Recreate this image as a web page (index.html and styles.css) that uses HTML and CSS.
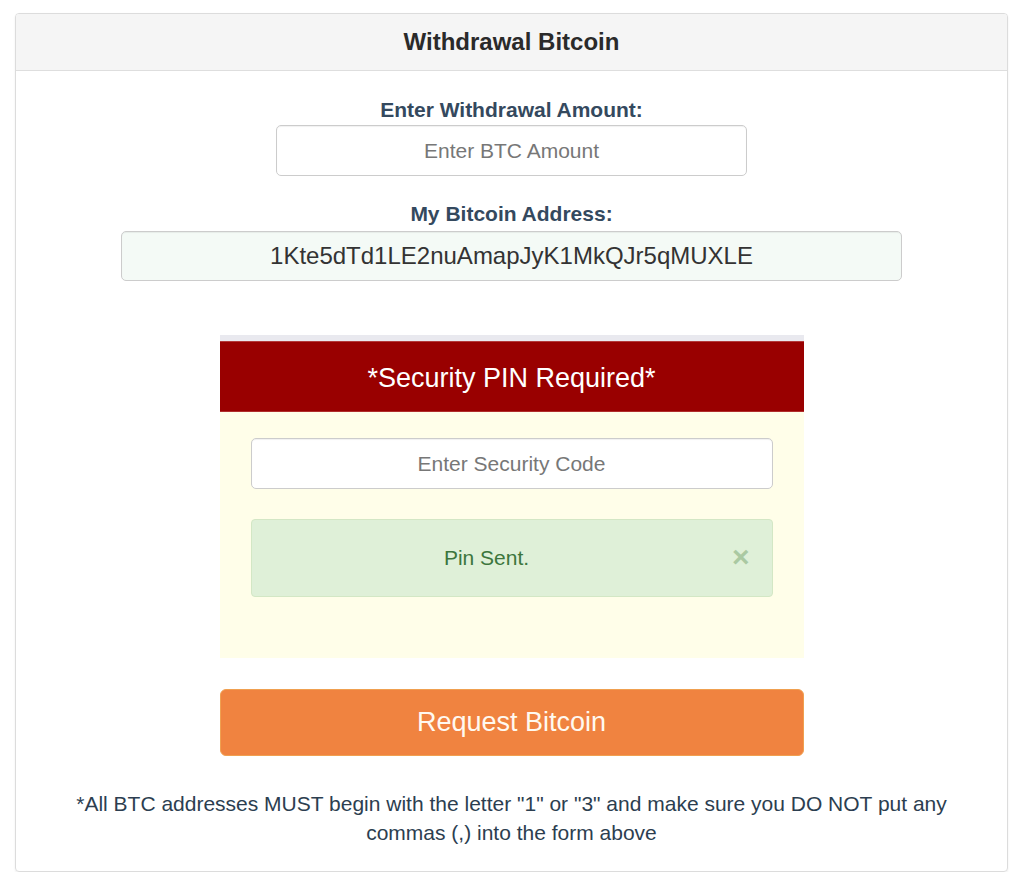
FILE: index.html
```html
<!DOCTYPE html>
<html lang="en">
<head>
  <meta charset="UTF-8">
  <title>Withdrawal Bitcoin</title>
  <link rel="stylesheet" href="styles.css">
</head>
<body>

  <!-- Withdrawal panel -->
  <div class="panel">
    <div class="panel-heading">Withdrawal Bitcoin</div>

    <div class="panel-body">
      <label class="field-label" for="amount">Enter Withdrawal Amount:</label>
      <input type="text" id="amount" class="field amount" placeholder="Enter BTC Amount">

      <label class="field-label" for="address">My Bitcoin Address:</label>
      <input type="text" id="address" class="field address" value="1Kte5dTd1LE2nuAmapJyK1MkQJr5qMUXLE" readonly>

      <!-- Security PIN box -->
      <div class="pin-box">
        <div class="pin-heading">*Security PIN Required*</div>
        <div class="pin-body">
          <input type="text" class="field pin" placeholder="Enter Security Code">
          <div class="alert-success">
            <span>Pin Sent.</span>
            <button class="close" type="button">&times;</button>
          </div>
        </div>
      </div>

      <button class="request-button" type="button">Request Bitcoin</button>

      <p class="note">*All BTC addresses MUST begin with the letter "1" or "3" and make sure you DO NOT put any commas (,) into the form above</p>
    </div>
  </div>

</body>
</html>
```

FILE: styles.css
```css
/* Global styles */
body {
  margin: 0;
  padding: 0;
  background-color: #fff;
  font-family: "Liberation Sans", Arial, sans-serif;
  color: #333;
}

/* Panel */
.panel {
  margin: 13px 16px 0 15px;
  border: 1px solid #dcdcdc;
  border-radius: 4px;
  box-shadow: 0 1px 2px rgba(0, 0, 0, 0.08);
  overflow: hidden;
}

.panel-heading {
  height: 57px;
  line-height: 56px;
  text-align: center;
  font-size: 24px;
  font-weight: bold;
  color: #2a2a2a;
  background-color: #f5f5f5;
  border-bottom: 1px solid #dedede;
  box-sizing: border-box;
}

.panel-body {
  display: flex;
  flex-direction: column;
  align-items: center;
  padding: 27px 0 24px;
}

/* Form fields */
.field-label {
  display: block;
  font-size: 21px;
  line-height: 24px;
  font-weight: bold;
  color: #34495e;
}

.field {
  box-sizing: border-box;
  height: 51px;
  border: 1px solid #ccc;
  border-radius: 5px;
  background-color: #fff;
  font-family: "Liberation Sans", Arial, sans-serif;
  font-size: 21px;
  color: #555;
  text-align: center;
  outline: none;
  box-shadow: inset 0 1px 1px rgba(0, 0, 0, 0.06);
}

.field::placeholder {
  color: #777;
}

.amount {
  width: 471px;
  margin: 3px 0 26px;
}

.address {
  width: 781px;
  height: 50px;
  margin-top: 5px;
  background-color: #f4faf6;
  font-size: 24px;
  color: #333;
}

/* Security PIN box */
.pin-box {
  width: 584px;
  margin-top: 54px;
  border-top: 6px solid #e9e9ef;
}

.pin-heading {
  height: 71px;
  line-height: 72px;
  text-align: center;
  font-size: 27px;
  color: #fff;
  background-color: #990000;
  border-top: 1px solid #b33a3a;
  border-bottom: 1px solid #b02c2c;
  box-sizing: border-box;
}

.pin-body {
  display: flex;
  flex-direction: column;
  padding: 26px 31px 61px;
  background-color: #fffee9;
}

.pin {
  width: 100%;
  height: 51px;
}

.alert-success {
  position: relative;
  height: 78px;
  margin-top: 30px;
  padding: 0 65px 0 15px;
  display: flex;
  align-items: center;
  justify-content: center;
  box-sizing: border-box;
  border: 1px solid #d3e7c5;
  border-radius: 4px;
  background-color: #dff0d8;
  color: #3c763d;
  font-size: 21px;
}

.close {
  position: absolute;
  right: 22px;
  top: 23px;
  padding: 0;
  border: none;
  background: none;
  font-family: "Liberation Sans", Arial, sans-serif;
  font-size: 30px;
  line-height: 28px;
  font-weight: bold;
  color: #aac9a2;
  cursor: pointer;
}

/* Request button */
.request-button {
  width: 584px;
  height: 67px;
  margin-top: 31px;
  border: 1px solid #f0a050;
  border-radius: 6px;
  background-color: #f08340;
  font-family: "Liberation Sans", Arial, sans-serif;
  font-size: 27px;
  color: #fff9f0;
  cursor: pointer;
}

/* Footer note */
.note {
  width: 900px;
  margin: 33px 0 0;
  text-align: center;
  font-size: 21px;
  line-height: 29px;
  color: #2c3e50;
}
```
